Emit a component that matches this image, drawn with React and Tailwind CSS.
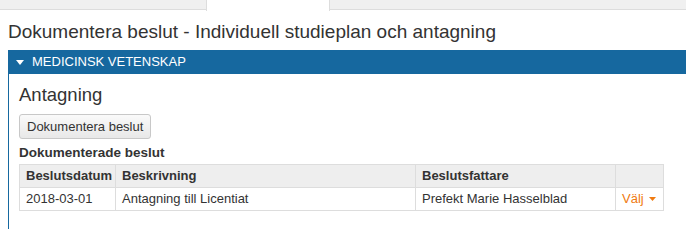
export default function App() {
  const font = { fontFamily: '"Liberation Sans", Arial, sans-serif' };
  return (
    <div className="w-[686px] h-[229px] overflow-hidden bg-white text-[#333]" style={font}>
      {/* Tab strip */}
      <div className="flex h-[10px] border-b border-[#ddd] bg-[#f0f0f0]">
        <div className="w-[206px]" />
        <div className="w-[124px] h-[11px] bg-white border-x border-[#ddd]" />
      </div>

      <h1 className="pl-2 pt-[11px] text-[19px] leading-[22px]">
        Dokumentera beslut - Individuell studieplan och antagning
      </h1>

      {/* Panel */}
      <div className="ml-2 mt-[7px] border-l border-[#16689f] h-[200px]">
        <div className="flex items-center h-[24px] bg-[#16689f] text-white text-[13px] pl-[7px] gap-[8px]">
          <svg width="8" height="5" viewBox="0 0 8 5"><path d="M0 0h8L4 5z" fill="#fff" /></svg>
          <span>MEDICINSK VETENSKAP</span>
        </div>
        <div className="pl-[10px] pr-[22px]">
          <h2 className="text-[18.5px] leading-[22px] pt-[10px]">Antagning</h2>
          <button className="block mt-[8px] h-[25px] px-[7px] text-[13px] rounded-[3px] border border-[#c8c8c8] bg-gradient-to-b from-[#fafafa] to-[#e8e8e8] text-[#333]">
            Dokumentera beslut
          </button>
          <div className="font-bold text-[13.5px] leading-[16px] mt-[6px]">Dokumenterade beslut</div>
          <table className="w-full table-fixed border-collapse text-[13px] mt-[3px]">
            <thead>
              <tr className="bg-[#eee] h-[23px] text-left">
                <th className="w-[96px] border border-[#ddd] px-[6px] font-bold whitespace-nowrap">Beslutsdatum</th>
                <th className="w-[300px] border border-[#ddd] px-[6px] font-bold">Beskrivning</th>
                <th className="w-[200px] border border-[#ddd] px-[6px] font-bold">Beslutsfattare</th>
                <th className="border border-[#ddd]" />
              </tr>
            </thead>
            <tbody>
              <tr className="h-[23px]">
                <td className="border border-[#ddd] px-[6px]">2018-03-01</td>
                <td className="border border-[#ddd] px-[6px]">Antagning till Licentiat</td>
                <td className="border border-[#ddd] px-[6px]">Prefekt Marie Hasselblad</td>
                <td className="border border-[#ddd] px-[6px] text-[#f07a10]">
                  <span className="inline-flex items-center gap-[5px]">
                    Välj
                    <svg width="7" height="4" viewBox="0 0 7 4"><path d="M0 0h7L3.5 4z" fill="#f07a10" /></svg>
                  </span>
                </td>
              </tr>
            </tbody>
          </table>
        </div>
      </div>
    </div>
  );
}
